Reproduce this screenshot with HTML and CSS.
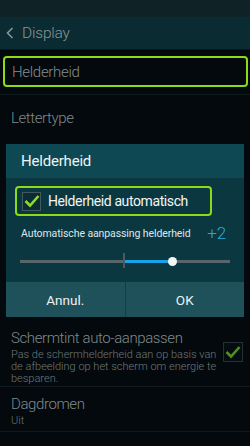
FILE: index.html
```html
<!DOCTYPE html>
<html lang="nl">
<head>
    <meta charset="UTF-8">
    <meta name="viewport" content="width=device-width, initial-scale=1.0">
    <title>Display</title>
    <link rel="stylesheet" href="styles.css">
</head>
<body>
    <div class="status-bar"></div>

    <div class="action-bar">
        <svg class="back" width="8" height="12" viewBox="0 0 8 12">
            <path d="M6.5 1 L1.5 6 L6.5 11" fill="none" stroke="#8a9698" stroke-width="1.6"/>
        </svg>
        <span>Display</span>
    </div>

    <div class="row row-selected">
        <div class="highlight">Helderheid</div>
    </div>

    <div class="row row-font">
        <div class="row-title">Lettertype</div>
    </div>

    <div class="dialog">
        <div class="dialog-title">Helderheid</div>
        <div class="dialog-body">
            <div class="auto-check">
                <span class="checkbox">
                    <svg width="16" height="14" viewBox="0 0 16 14">
                        <path d="M1.5 7 L6 11.5 L14.5 2" fill="none" stroke="#8fdc1e" stroke-width="2.6"/>
                    </svg>
                </span>
                <span>Helderheid automatisch</span>
            </div>
            <div class="adjust">
                <span>Automatische aanpassing helderheid</span>
                <span class="value">+2</span>
            </div>
            <div class="slider">
                <div class="track"></div>
                <div class="fill"></div>
                <div class="tick"></div>
                <div class="thumb"></div>
            </div>
        </div>
        <div class="dialog-buttons">
            <button>Annul.</button>
            <button>OK</button>
        </div>
    </div>

    <div class="row setting">
        <div class="setting-text">
            <div class="row-title">Schermtint auto-aanpassen</div>
            <div class="row-desc">Pas de schermhelderheid aan op basis van de afbeelding op het scherm om energie te besparen.</div>
        </div>
        <span class="checkbox small-check">
            <svg width="16" height="14" viewBox="0 0 16 14">
                <path d="M1.5 7 L6 11.5 L14.5 2" fill="none" stroke="#4f8f1a" stroke-width="2.6"/>
            </svg>
        </span>
    </div>

    <div class="row dream">
        <div class="row-title">Dagdromen</div>
        <div class="row-desc">Uit</div>
    </div>
</body>
</html>
```

FILE: styles.css
```css
body {
    font-family: Roboto, "Noto Sans", sans-serif;
    font-weight: 300;
    background-color: #03090c;
    margin: 0;
    width: 250px;
    height: 446px;
    overflow: hidden;
}

.status-bar {
    height: 17px;
    background-color: #0f2226;
}

.action-bar {
    height: 32px;
    background-color: #0b2b32;
    border-bottom: 1px solid #08191d;
    display: flex;
    align-items: center;
    gap: 8px;
    padding-left: 6px;
    color: #8a9698;
    font-size: 15.5px;
    letter-spacing: -0.2px;
}

.row {
    border-bottom: 1px solid #111a1d;
}

.row-selected {
    height: 45px;
    padding-top: 6px;
    box-sizing: border-box;
}

.highlight {
    margin: 0 2px 0 3px;
    height: 31px;
    box-sizing: border-box;
    border: 2.5px solid #8cdb17;
    border-radius: 4px;
    padding-left: 7px;
    display: flex;
    align-items: center;
    color: #878d8e;
    font-size: 15px;
    letter-spacing: -0.3px;
}

.row-title {
    color: #80898b;
    font-size: 15px;
    letter-spacing: -0.4px;
    padding-left: 11px;
}

.row-font {
    height: 49px;
    padding-top: 14px;
    box-sizing: border-box;
    border-bottom: none;
}

.dialog {
    margin: 0 6px;
}

.dialog-title {
    height: 34px;
    background-color: #0e4853;
    color: #eef3f4;
    font-size: 15px;
    font-weight: 400;
    letter-spacing: -0.2px;
    display: flex;
    align-items: center;
    padding-left: 15px;
}

.dialog-body {
    background-color: #0b3840;
    height: 104px;
    padding-top: 8px;
    box-sizing: border-box;
}

.auto-check {
    margin-left: 9px;
    width: 197px;
    height: 30px;
    box-sizing: border-box;
    border: 2.5px solid #8cdb17;
    border-radius: 4px;
    display: flex;
    align-items: center;
    gap: 7px;
    padding-left: 5px;
    color: #f2f6f6;
    font-size: 14px;
    font-weight: 400;
    letter-spacing: -0.4px;
}

.checkbox {
    width: 19px;
    height: 19px;
    box-sizing: border-box;
    border: 1px solid #46585c;
    background-color: #082d34;
    display: flex;
    align-items: center;
    justify-content: center;
}

.adjust {
    display: flex;
    justify-content: space-between;
    align-items: center;
    padding: 0 18px 0 15px;
    margin-top: 7px;
    color: #dfe6e7;
    font-size: 10.5px;
    font-weight: 400;
    letter-spacing: -0.1px;
}

.value {
    color: #28a8dc;
    font-size: 17px;
    font-weight: 300;
}

.slider {
    position: relative;
    height: 20px;
    margin: 8px 14px 0 14px;
}

.track {
    position: absolute;
    left: 0;
    right: 0;
    top: 9px;
    height: 3px;
    background-color: #56666b;
}

.fill {
    position: absolute;
    left: 105px;
    width: 47px;
    top: 9px;
    height: 3px;
    background-color: #18a2ea;
}

.tick {
    position: absolute;
    left: 103px;
    top: 2px;
    width: 2px;
    height: 15px;
    background-color: #4a5a5e;
}

.thumb {
    position: absolute;
    left: 148px;
    top: 6px;
    width: 9px;
    height: 9px;
    border-radius: 50%;
    background-color: #f4f6f6;
}

.dialog-buttons {
    display: flex;
    height: 35px;
}

.dialog-buttons button {
    flex: 1;
    border: none;
    background-color: #1e515a;
    color: #eef2f3;
    font-family: Roboto, sans-serif;
    font-size: 13.5px;
    padding: 0;
}

.dialog-buttons button + button {
    border-left: 1px solid #143e45;
}

.setting {
    display: flex;
    align-items: center;
    padding: 13px 7px 3px 0;
    height: 70px;
    box-sizing: border-box;
    border-bottom: 1px solid #111a1d;
}

.setting-text {
    flex: 1;
}

.row-desc {
    color: #6f797b;
    font-size: 11px;
    line-height: 12px;
    padding-left: 11px;
    margin-top: 2px;
}

.small-check {
    width: 20px;
    height: 20px;
    border-color: #263034;
    background-color: #060d10;
    margin-top: -10px;
    flex-shrink: 0;
}

.dream {
    height: 45px;
    padding-top: 8px;
    box-sizing: border-box;
}
```
